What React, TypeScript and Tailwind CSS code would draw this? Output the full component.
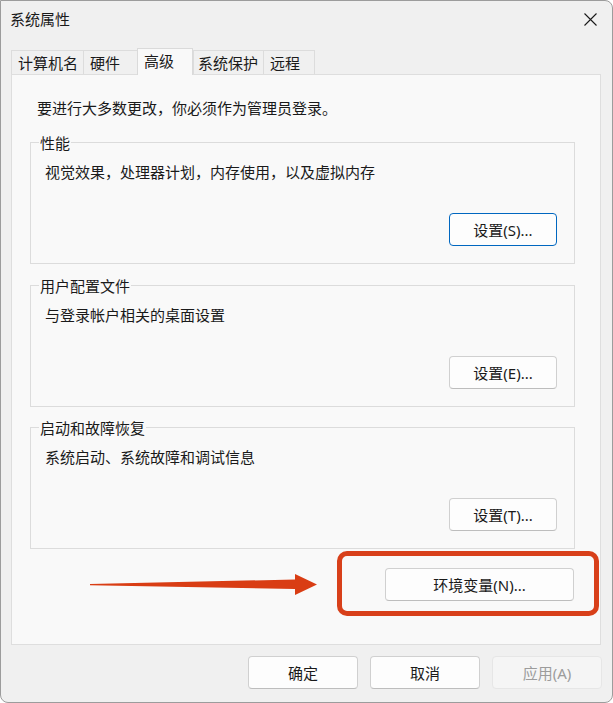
const font = { fontFamily: '"Noto Sans", "Noto Sans CJK SC", sans-serif' };

const tabs = [
  { label: "计算机名", w: "w-[72px]" },
  { label: "硬件", w: "w-[54px]" },
  { label: "高级", w: "w-[56px]", active: true },
  { label: "系统保护", w: "w-[70px]", pad: "pl-[4px]" },
  { label: "远程", w: "w-[52px]", last: true },
];

const groups = [
  { title: "性能", text: "视觉效果，处理器计划，内存使用，以及虚拟内存", button: "设置(S)...", primary: true },
  { title: "用户配置文件", text: "与登录帐户相关的桌面设置", button: "设置(E)..." },
  { title: "启动和故障恢复", text: "系统启动、系统故障和调试信息", button: "设置(T)...", last: true },
];

const Button = ({
  label,
  classes,
  primary,
  disabled,
}: {
  label: string;
  classes?: string;
  primary?: boolean;
  disabled?: boolean;
}) => {
  const tone = disabled
    ? "bg-[#f5f5f5] border-[#e6e6e6] text-[#9c9c9c]"
    : primary
      ? "bg-[#fdfdfd] border-[#0067c0] text-[#1a1a1a]"
      : "bg-[#fdfdfd] border-[#d0d0d0] border-b-[#bdbdbd] text-[#1a1a1a]";
  return (
    <div
      className={`${classes} h-[33px] flex items-center justify-center rounded-[4px] border text-[15px] leading-[20px] ${tone}`}
    >
      {label}
    </div>
  );
};

export default function App() {
  return (
    <div
      style={font}
      className="relative w-[613px] h-[703px] bg-[#f0f0f0] border border-[#9c9c9c] rounded-tr-[8px] rounded-b-[8px] flex flex-col text-[#1a1a1a] overflow-hidden"
    >
      {/* title bar */}
      <div className="h-[35px] flex items-center justify-between pl-[9px] pr-[15px]">
        <span className="text-[15px] leading-[20px]">系统属性</span>
        <svg width="13" height="13" viewBox="0 0 13 13" className="mt-[1px]">
          <path d="M0.5 0.5 L12.5 12.5 M12.5 0.5 L0.5 12.5" stroke="#1a1a1a" strokeWidth="1.1" />
        </svg>
      </div>

      {/* tabs */}
      <div className="mt-[12px] ml-[10px] h-[27px] flex items-end relative z-10">
        {tabs.map((t) =>
          t.active ? (
            <div
              key={t.label}
              className={`${t.w} h-[27px] bg-[#f9f9f9] border-l border-t border-r border-[#dadada] flex items-center pl-[6px] pb-[3px] text-[15px] leading-[20px]`}
            >
              {t.label}
            </div>
          ) : (
            <div
              key={t.label}
              className={`${t.w} h-[24px] mb-[1px] bg-[#f0f0f0] border-l border-t ${t.last ? "border-r" : ""} border-[#dcdcdc] flex items-center ${t.pad ?? "pl-[6px]"} text-[15px] leading-[20px]`}
            >
              {t.label}
            </div>
          )
        )}
      </div>

      {/* tab page */}
      <div className="-mt-[1px] ml-[10px] w-[590px] h-[571px] bg-[#f9f9f9] border border-[#dedede] flex flex-col">
        <p className="pl-[25px] pt-[23px] text-[15px] leading-[20px]">
          要进行大多数更改，你必须作为管理员登录。
        </p>

        <div className="pl-[18px] mt-[24px] flex flex-col gap-[21px]">
          {groups.map((g) => (
            <div
              key={g.title}
              className={`relative w-[545px] h-[122px] border border-[#dcdcdc] flex flex-col ${g.last ? "-mt-[1px]" : ""}`}
            >
              <span className="absolute -top-[10px] left-[8px] px-[1px] bg-[#f9f9f9] text-[15px] leading-[20px]">
                {g.title}
              </span>
              <p className="pl-[14px] pt-[19px] text-[15px] leading-[20px]">{g.text}</p>
              <Button
                label={g.button}
                primary={g.primary}
                classes="w-[108px] self-end mr-[17px] mt-auto mb-[17px]"
              />
            </div>
          ))}
        </div>

        <div className="mt-[19px] flex justify-end pr-[26px]">
          <Button label="环境变量(N)..." classes="w-[189px]" />
        </div>
      </div>

      {/* dialog buttons */}
      <div className="mt-[11px] flex justify-end gap-[12px] pr-[10px]">
        <Button label="确定" classes="w-[110px]" />
        <Button label="取消" classes="w-[110px]" />
        <Button label="应用(A)" classes="w-[110px]" disabled />
      </div>

      {/* annotation */}
      <div className="absolute left-[336px] top-[550px] w-[262px] h-[65px] border-[5px] border-[#d8401a] rounded-[10px]" />
      <svg
        className="absolute left-[89px] top-[571px]"
        width="230"
        height="24"
        viewBox="0 0 230 24"
      >
        <polygon
          points="0,12 205,7.5 205,2 227,12.5 205,23 205,17 0,13.2"
          fill="#d93d14"
        />
      </svg>
    </div>
  );
}
